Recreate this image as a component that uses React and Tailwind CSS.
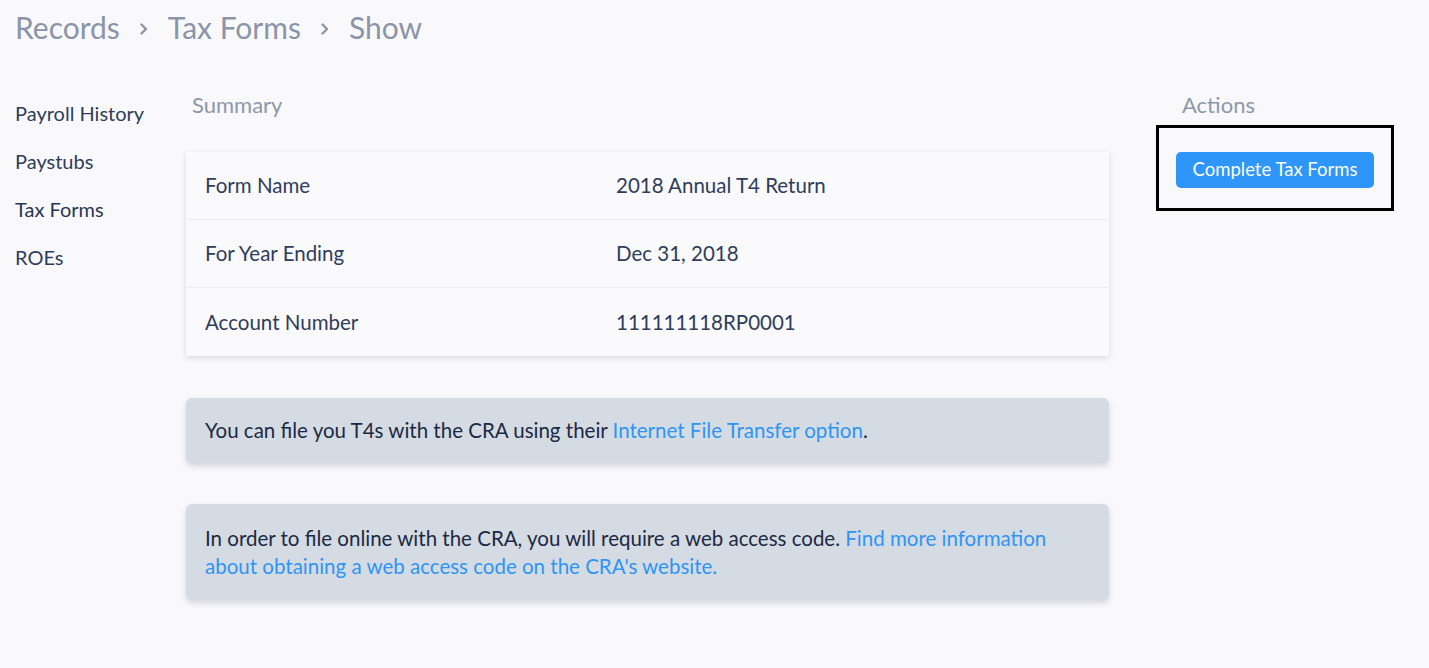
import React from "react";

const font = { fontFamily: "Lato, 'Noto Sans', sans-serif" };

function Chevron() {
  return (
    <svg width="10" height="14" viewBox="0 0 10 14" className="mx-[19px] mt-[4px]">
      <path d="M2.5 2.5 L7 7 L2.5 11.5" fill="none" stroke="#8b94a8" strokeWidth="2.4" strokeLinecap="round" strokeLinejoin="round" />
    </svg>
  );
}

function Row({ label, value, last }) {
  return (
    <div className={`flex h-[68px] items-center ${last ? "" : "border-b border-[#ececf1]"}`}>
      <div className="w-[430px] pl-[19px]">{label}</div>
      <div>{value}</div>
    </div>
  );
}

export default function App() {
  return (
    <div className="min-h-[668px] w-[1429px] bg-[#f9f9fc] text-[#2f3d5a]" style={font}>
      <div className="flex h-[54px] items-center pl-[15px] text-[30px] text-[#8b94a8]">
        <span>Records</span>
        <Chevron />
        <span>Tax Forms</span>
        <Chevron />
        <span>Show</span>
      </div>
      <div className="flex pt-[35px]">
        <nav className="w-[186px] pl-[15px] text-[20px]">
          <div className="flex h-[48px] items-center">Payroll History</div>
          <div className="flex h-[48px] items-center">Paystubs</div>
          <div className="flex h-[48px] items-center text-[#283653]">Tax Forms</div>
          <div className="flex h-[48px] items-center">ROEs</div>
        </nav>
        <main className="w-[923px] text-[20.5px]">
          <h2 className="-mt-[1px] pl-[6px] text-[22px] leading-[34px] text-[#8e97a9]">Summary</h2>
          <div className="mt-[30px] bg-[#fafafd] shadow-[0_2px_6px_rgba(20,30,60,0.14)]">
            <Row label="Form Name" value="2018 Annual T4 Return" />
            <Row label="For Year Ending" value="Dec 31, 2018" />
            <Row label="Account Number" value="111111118RP0001" last />
          </div>
          <div className="mt-[42px] flex h-[65px] items-center rounded-[6px] bg-[#d5dbe2] px-[19px] text-[#1c2944] shadow-[0_3px_6px_rgba(20,30,60,0.16)]">
            <p>
              You can file you T4s with the CRA using their{" "}
              <a className="text-[#2e95f6]">Internet File Transfer option</a>.
            </p>
          </div>
          <div className="mt-[41px] rounded-[6px] bg-[#d5dbe2] px-[19px] py-[20px] leading-[28px] text-[#1c2944] shadow-[0_3px_6px_rgba(20,30,60,0.16)]">
            <p>
              In order to file online with the CRA, you will require a web access code.{" "}
              <a className="text-[#2e95f6]">
                Find more information
                <br />
                about obtaining a web access code on the CRA's website.
              </a>
            </p>
          </div>
        </main>
        <aside className="ml-[47px]">
          <h2 className="-mt-[1px] pl-[26px] text-[22px] leading-[34px] text-[#8e97a9]">Actions</h2>
          <div className="mt-[3px] h-[86px] w-[238px] border-[3px] border-black pl-[17px] pt-[24px]">
            <button className="h-[36px] w-[198px] rounded-[5px] bg-[#2d96f8] text-[18.5px] text-white">
              Complete Tax Forms
            </button>
          </div>
        </aside>
      </div>
    </div>
  );
}
